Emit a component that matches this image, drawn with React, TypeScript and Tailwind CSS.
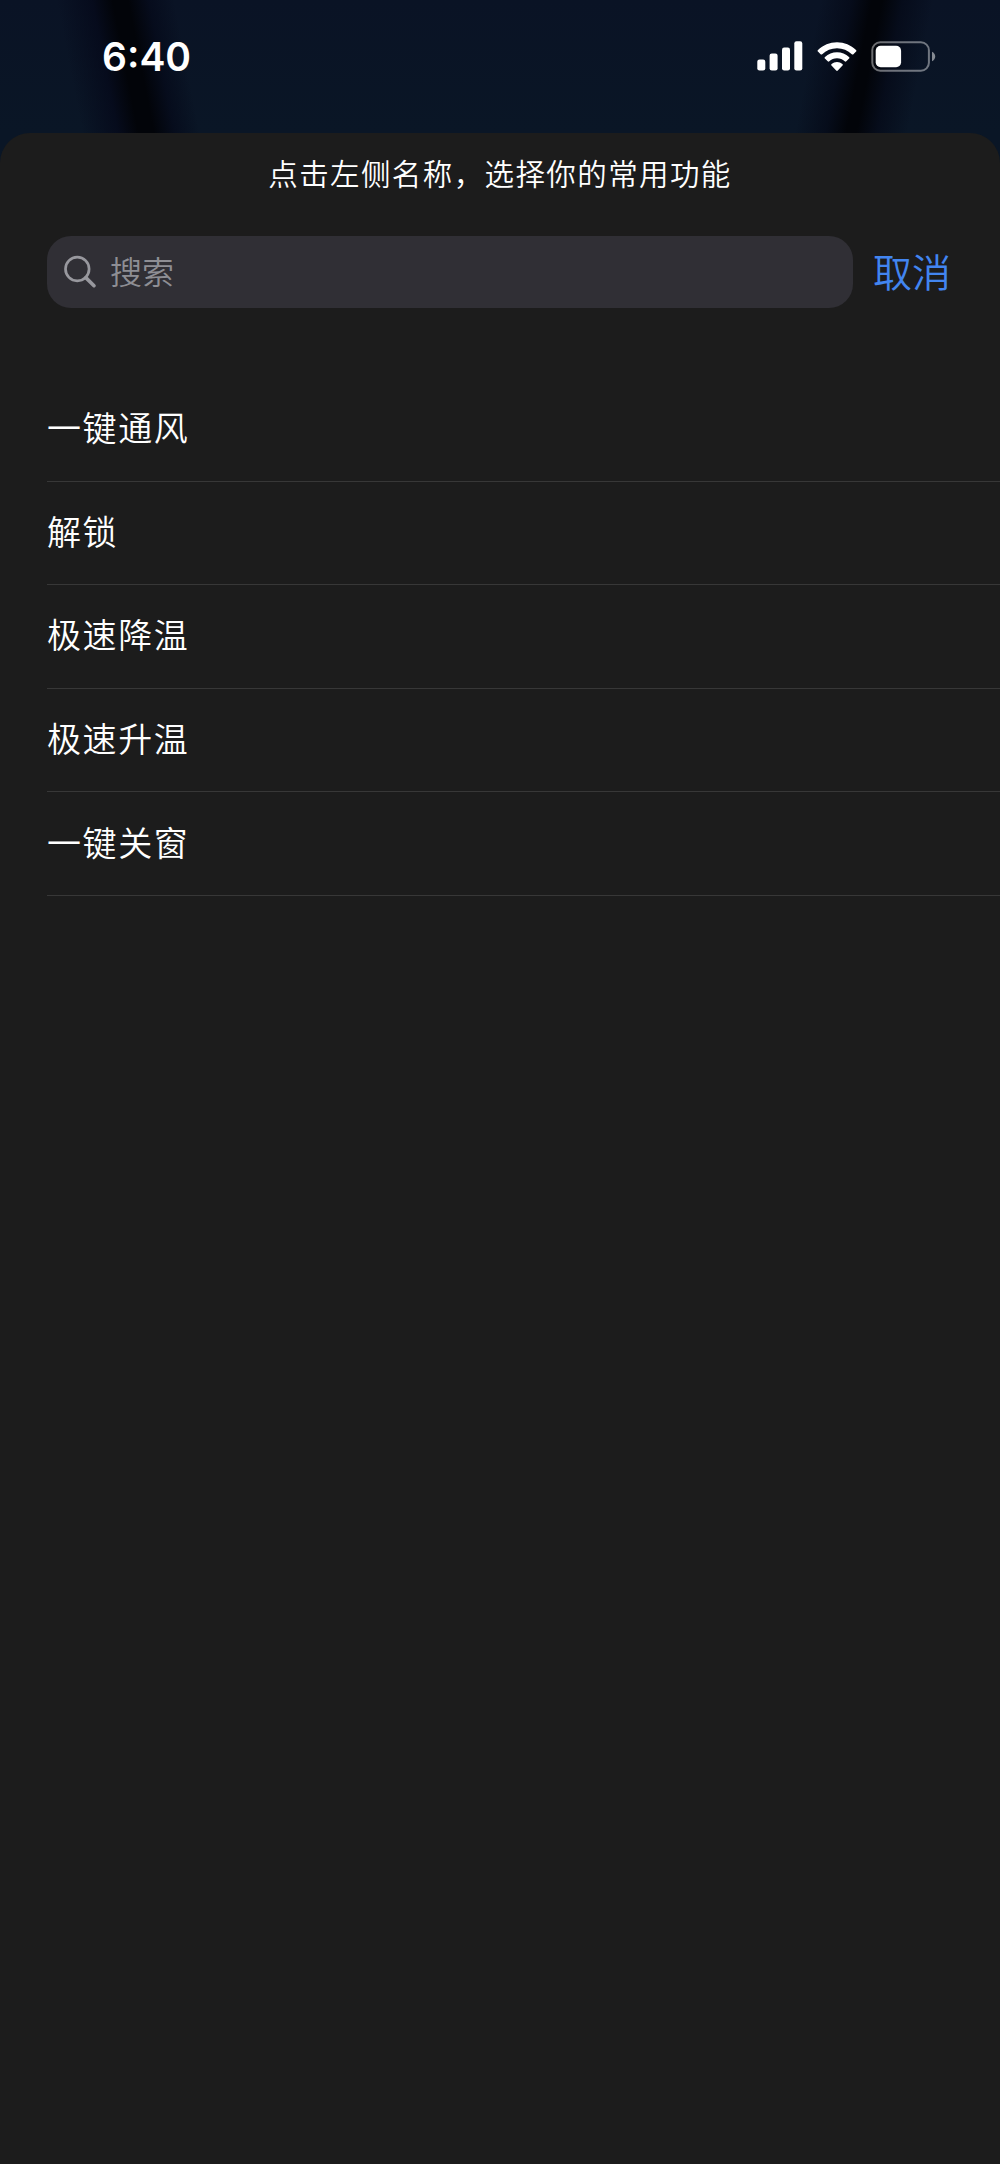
import { useState } from "react";

const FEATURES = ["一键通风", "解锁", "极速降温", "极速升温", "一键关窗"];

const SignalIcon = () => (
  <svg width="46" height="30" viewBox="0 0 46 30" fill="#fff">
    <rect x="0.3" y="18.5" width="8" height="11" rx="2.2" />
    <rect x="12.6" y="12.6" width="8" height="16.9" rx="2.2" />
    <rect x="25" y="6.5" width="8" height="23" rx="2.2" />
    <rect x="37.3" y="0.3" width="8" height="29.2" rx="2.2" />
  </svg>
);

const WifiIcon = () => (
  <svg width="40" height="30" viewBox="0 0 40 30" fill="#fff">
    <path d="M20 .2c7.300 0 14 2.900 19 7.700.6.500.6 1.100.1 1.600l-2.700 2.700c-.5.500-1.100.5-1.600 0C30.900 8.500 25.700 6.300 20 6.300S9.100 8.500 5.200 12.200c-.5.500-1.100.5-1.600 0L.9 9.500c-.5-.5-.5-1.100.1-1.600C6 3.100 12.700.2 20 .2Z" />
    <path d="M20 10.200c4.600 0 8.800 1.800 12 4.700.6.500.6 1.100.1 1.600l-2.800 2.800c-.5.500-1.100.5-1.600 0-2-1.900-4.700-3.100-7.700-3.100s-5.700 1.200-7.700 3.100c-.5.500-1.100.5-1.600 0l-2.800-2.800c-.5-.5-.5-1.100.1-1.600 3.200-2.900 7.400-4.700 12-4.700Z" />
    <path d="M20 20c2 0 3.900.7 5.400 2 .6.500.6 1.100.1 1.600l-4.700 5c-.5.500-1.100.5-1.600 0l-4.700-5c-.5-.5-.5-1.100.1-1.600 1.500-1.300 3.400-2 5.400-2Z" />
  </svg>
);

const BatteryIcon = () => (
  <svg width="65" height="31" viewBox="0 0 65 31">
    <rect x="1.300" y="1.300" width="56.600" height="28.400" rx="8" fill="none" stroke="#fff" strokeOpacity="0.42" strokeWidth="2" />
    <rect x="4.700" y="4.700" width="25.400" height="21.600" rx="5" fill="#fff" />
    <path d="M61 10.800c2 .8 3.200 2.700 3.200 4.700S63 19.400 61 20.200Z" fill="#fff" fillOpacity="0.5" />
  </svg>
);

const SearchIcon = () => (
  <svg width="34" height="34" viewBox="0 0 34 34" fill="none" stroke="#98989e" strokeLinecap="round">
    <circle cx="14.300" cy="14" r="11.800" strokeWidth="2.700" />
    <path d="M22.800 22.600 31 30.700" strokeWidth="3.600" />
  </svg>
);

const StatusBar = () => (
  <header className="flex h-[133px] items-start justify-between bg-[linear-gradient(79deg,transparent_8%,#05091acc_11.5%,#020409_13.5%,#020409_15%,#050a1acc_17%,transparent_19.5%),linear-gradient(101deg,transparent_80%,#050a18cc_83%,#020409_85%,#020409_86%,#050a18cc_88%,transparent_91%),linear-gradient(180deg,#0a1325,#0a1626)] pr-16 pl-[102px]">
    <span className="mt-[33px] font-['Inter'] text-[39px] leading-[48px] font-semibold text-white">
      6:40
    </span>
    <div className="mt-[41px] flex items-start">
      <SignalIcon />
      <span className="ml-[14px] pt-px">
        <WifiIcon />
      </span>
      <span className="ml-[14px]">
        <BatteryIcon />
      </span>
    </div>
  </header>
);

const App = () => {
  const [keyword, setKeyword] = useState("");
  const visible = FEATURES.filter((name) => name.includes(keyword.trim()));

  return (
    <div className="flex h-[2164px] w-[1000px] flex-col overflow-hidden bg-[#0a1626] font-['Noto_Sans_CJK_SC',sans-serif] font-[350] text-white">
      <StatusBar />

      <main className="flex-1 rounded-t-[30px] bg-[#1c1c1c]">
        <h1 className="pt-[16px] text-center text-[29.500px] leading-[46px] font-[350] tracking-[1.400px]">
          点击左侧名称，选择你的常用功能
        </h1>

        <div className="mt-[41px] flex h-[72px] items-center pl-[47px]">
          <label className="flex h-full w-[806px] items-center rounded-[24px] bg-[#302f35] pl-4">
            <SearchIcon />
            <input
              value={keyword}
              onChange={(e) => setKeyword(e.target.value)}
              placeholder="搜索"
              className="mb-[4px] ml-[13px] h-12 flex-1 bg-transparent text-[32px] outline-none placeholder:text-[#8e8e94]"
            />
          </label>
          <button
            type="button"
            onClick={() => setKeyword("")}
            className="mb-[5px] ml-5 text-[39px] leading-[56px] text-[#4285f0]"
          >
            取消
          </button>
        </div>

        <ul className="mt-[70px] pl-[47px]">
          {visible.map((name) => (
            <li
              key={name}
              className="flex h-[103.600px] items-center border-b border-[#373737] pb-[5px] text-[34px] tracking-[1.600px]"
            >
              {name}
            </li>
          ))}
        </ul>
      </main>
    </div>
  );
};

export default App;
